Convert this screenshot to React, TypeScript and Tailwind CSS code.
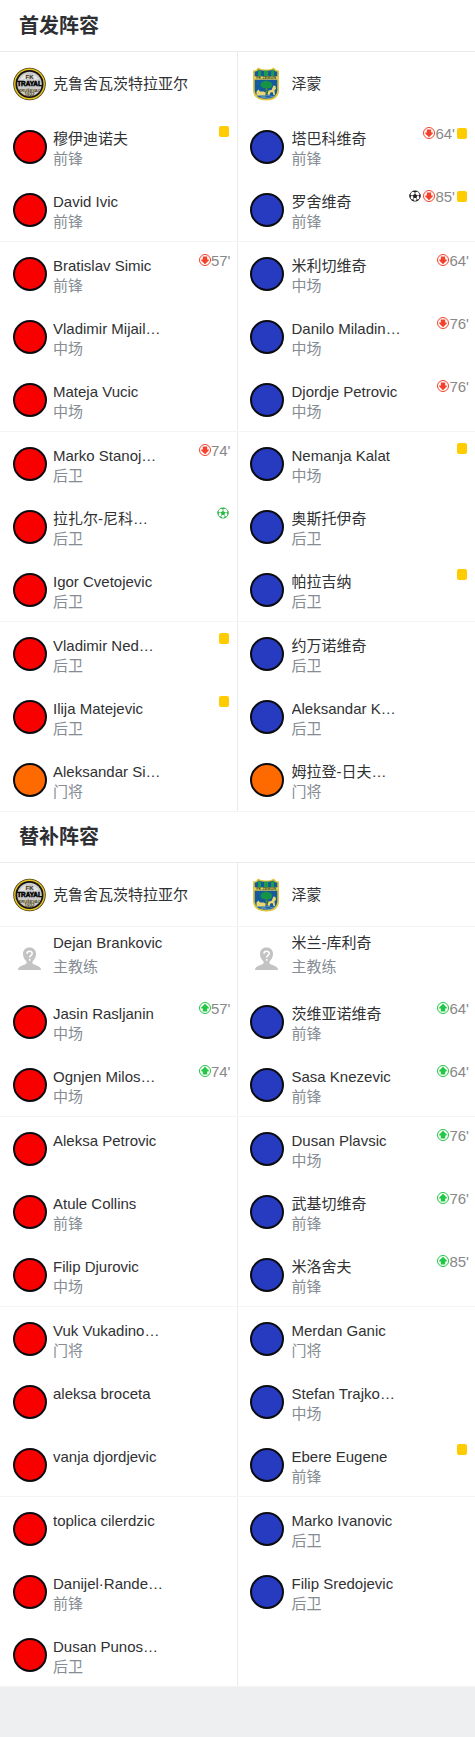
import React from "react";

type Kind = "red" | "blue" | "orange" | "coach";
type Event = "goal" | "ownGoal" | "out" | "in" | "card";
type Player = {
  name: string;
  role?: string;
  kind: Kind;
  events?: Event[];
  minute?: string;
};

const p = (kind: Kind, name: string, role?: string, events?: Event[], minute?: string): Player => ({
  kind,
  name,
  role,
  events,
  minute,
});

const startersHome: Player[] = [
  p("red", "穆伊迪诺夫", "前锋", ["card"]),
  p("red", "David Ivic", "前锋"),
  p("red", "Bratislav Simic", "前锋", ["out"], "57'"),
  p("red", "Vladimir Mijail…", "中场"),
  p("red", "Mateja Vucic", "中场"),
  p("red", "Marko Stanoj…", "后卫", ["out"], "74'"),
  p("red", "拉扎尔-尼科…", "后卫", ["ownGoal"]),
  p("red", "Igor Cvetojevic", "后卫"),
  p("red", "Vladimir Ned…", "后卫", ["card"]),
  p("red", "Ilija Matejevic", "后卫", ["card"]),
  p("orange", "Aleksandar Si…", "门将"),
];

const startersAway: Player[] = [
  p("blue", "塔巴科维奇", "前锋", ["out", "card"], "64'"),
  p("blue", "罗舍维奇", "前锋", ["goal", "out", "card"], "85'"),
  p("blue", "米利切维奇", "中场", ["out"], "64'"),
  p("blue", "Danilo Miladin…", "中场", ["out"], "76'"),
  p("blue", "Djordje Petrovic", "中场", ["out"], "76'"),
  p("blue", "Nemanja Kalat", "中场", ["card"]),
  p("blue", "奥斯托伊奇", "后卫"),
  p("blue", "帕拉吉纳", "后卫", ["card"]),
  p("blue", "约万诺维奇", "后卫"),
  p("blue", "Aleksandar K…", "后卫"),
  p("orange", "姆拉登-日夫…", "门将"),
];

const benchHome: Player[] = [
  p("coach", "Dejan Brankovic", "主教练"),
  p("red", "Jasin Rasljanin", "中场", ["in"], "57'"),
  p("red", "Ognjen Milos…", "中场", ["in"], "74'"),
  p("red", "Aleksa Petrovic"),
  p("red", "Atule Collins", "前锋"),
  p("red", "Filip Djurovic", "中场"),
  p("red", "Vuk Vukadino…", "门将"),
  p("red", "aleksa broceta"),
  p("red", "vanja djordjevic"),
  p("red", "toplica cilerdzic"),
  p("red", "Danijel·Rande…", "前锋"),
  p("red", "Dusan Punos…", "后卫"),
];

const benchAway: Player[] = [
  p("coach", "米兰-库利奇", "主教练"),
  p("blue", "茨维亚诺维奇", "前锋", ["in"], "64'"),
  p("blue", "Sasa Knezevic", "前锋", ["in"], "64'"),
  p("blue", "Dusan Plavsic", "中场", ["in"], "76'"),
  p("blue", "武基切维奇", "前锋", ["in"], "76'"),
  p("blue", "米洛舍夫", "前锋", ["in"], "85'"),
  p("blue", "Merdan Ganic", "门将"),
  p("blue", "Stefan Trajko…", "中场"),
  p("blue", "Ebere Eugene", "前锋", ["card"]),
  p("blue", "Marko Ivanovic", "后卫"),
  p("blue", "Filip Sredojevic", "后卫"),
];

function HomeLogo() {
  return (
    <svg viewBox="0 0 34 34" className="size-[34px] shrink-0" aria-hidden="true">
      <circle cx="16.5" cy="17" r="16.3" fill="#4a4218" />
      <circle cx="16.5" cy="17" r="15.4" fill="#e8c321" />
      <circle cx="16.5" cy="17" r="14" fill="#111" />
      <circle cx="16.5" cy="17" r="12.3" fill="#c9c9c9" />
      <path d="M7 13a10 10 0 0 1 6-6l2 5zM20 6l6 6-5 1z" fill="#e4e4e4" />
      <text x="16.5" y="11.5" textAnchor="middle" fontSize="6" fontWeight="bold" fill="#3a3210">FK</text>
      <text x="16.5" y="19.3" textAnchor="middle" fontSize="6.4" fontWeight="bold" fill="#000" stroke="#000" strokeWidth="0.5">TRAYAL</text>
      <text x="16.5" y="24.6" textAnchor="middle" fontSize="4" fontWeight="bold" fill="#54460f">KRUŠEVAC</text>
      <text x="16.5" y="29" textAnchor="middle" fontSize="4.5" fontWeight="bold" fill="#54460f">1932</text>
    </svg>
  );
}

function AwayLogo() {
  return (
    <svg viewBox="1.500 0 34 34" className="size-[34px] shrink-0" aria-hidden="true">
      <path d="M4.500 3.500Q8 3.500 9.500 .5Q13 2.800 17.500 2.400Q22 2.800 25.500 .5Q27 3.500 30.500 3.500V24Q29.500 33.500 17.500 33.500Q5.500 33.500 4.500 24Z" fill="#e0c63c" />
      <path d="M6.200 4.800Q9 4.500 10 2.600Q14 4 17.500 3.800Q21 4 25 2.600Q26 4.500 28.800 4.800V23.500Q28 31.800 17.500 31.800Q7 31.800 6.200 23.500Z" fill="#155a9d" />
      <path d="M9.500 3l3 .8V9h-3zM15.500 3.700h4.200V9h-4.200zM22.600 3.700l3-.9V9h-3z" fill="#1d9d4c" />
      <path d="M5.500 9.300h24.500v3.400H5.500z" fill="#e2cc56" />
      <text x="17.600" y="12.400" textAnchor="middle" fontSize="3.800" fontWeight="bold" fill="#33502c">FK ZEMUN</text>
      <path d="M17 20h2v7h-2z" fill="#587c2f" />
      <path d="M12 18q0-3 3-3.500 3-2 5 0 4 .5 3.500 3.500 .5 3-4 3.200-7 .8-7.500-3.200z" fill="#159447" />
      <path d="M8 27.500v-3l2-2 1.500 2H15l2 1v3H8zM19 27.500l1-4 3-.500 2-4.500 2 .5.500 3-1.500 1 .5 5h-1.500l-1-3-2 .5-1 2.500z" fill="#e9d871" />
      <path d="M8.500 29q2-1 4 0t4.500 0 4.500 0 5 0M12 30.800q3-1 6 0t5 0" stroke="#7fb0cc" strokeWidth=".7" fill="none" />
    </svg>
  );
}

function Avatar({ kind }: { kind: Kind }) {
  if (kind === "coach") {
    return (
      <svg viewBox="0 0 34 34" className="size-[34px] shrink-0" aria-hidden="true">
        <path
          d="M16.500 5.500c4 0 6.500 2.600 6.500 6.500 0 3.300-1.600 5.800-3.500 7.300v2.200c2 1.800 7.500 2 8.500 5.700v.8H5v-.8c1-3.700 6.500-3.900 8.500-5.700v-2.200C11.500 17.800 10 15.300 10 12c0-3.900 2.500-6.500 6.500-6.500z"
          fill="#c3c3c3"
        />
        <path d="M14 11.800c0-3.500 5.300-3.200 5.200-.3 0 2-2.500 1.800-2.500 4M16.700 17v1.700" fill="none" stroke="#fff" strokeWidth="1.500" />
      </svg>
    );
  }
  const fill = { red: "bg-[#f80000]", blue: "bg-[#263bc0]", orange: "bg-[#ff6a00]" }[kind];
  return <span className={`size-[34px] shrink-0 rounded-full border-2 border-[#0b0b12] ${fill}`} />;
}

function Ball({ color }: { color: string }) {
  return (
    <svg viewBox="0 0 12 12" className="mr-[2px] size-3 shrink-0" aria-hidden="true">
      <circle cx="6" cy="6" r="5.200" fill="#fff" stroke={color} strokeWidth=".8" />
      <path
        d="M6 3.700l2.300 1.700-.9 2.600H4.600l-.9-2.600zM3.400 1.100h5.200L6 2.700zM.6 3.700l1.800 1.900L1.100 8.600.5 6zM11.400 3.700L9.600 5.600l1.300 3 .6-2.600zM2 9.300l2.400.2.700 1.800-2-.6zM10 9.300l-2.400.2-.7 1.800 2-.6z"
        fill={color}
      />
      <path d="M6 4V2.500M8 5.500l1.900.2M7.200 7.700l.6 2M4.800 7.700l-.6 2M4 5.500l-1.900.2" stroke={color} strokeWidth=".6" />
    </svg>
  );
}

function Arrow({ up }: { up: boolean }) {
  const color = up ? "#22c745" : "#f4412c";
  return (
    <svg viewBox="0 0 12 12" className="size-3 shrink-0" aria-hidden="true">
      <circle cx="6" cy="6" r="5.500" fill="#fff" stroke={color} strokeWidth="1" />
      <path
        d={up ? "M6 1.800L9.800 5.600V6.500H8.200V9.500H3.800V6.500H2.200V5.600z" : "M6 10.200L9.800 6.400V5.500H8.200V2.500H3.800V5.500H2.200V6.400z"}
        fill={color}
      />
    </svg>
  );
}

function Events({ events, minute }: { events: Event[]; minute?: string }) {
  const onlyCard = events.length === 1 && events[0] === "card";
  return (
    <span className={`flex h-5 shrink-0 items-center self-start ${onlyCard ? "mt-[6px]" : "mt-2"}`}>
      {events.map((e) => {
        if (e === "goal") return <Ball key={e} color="#222222" />;
        if (e === "ownGoal") return <Ball key={e} color="#2fb84c" />;
        if (e === "card")
          return <span key={e} className="mr-[2px] ml-[2px] h-[11px] w-[10px] rounded-[2px] bg-[#ffcc00]" />;
        return (
          <React.Fragment key={e}>
            <Arrow up={e === "in"} />
            <span className="pt-[2px] text-[15px] leading-5 text-[#888888]">{minute}</span>
          </React.Fragment>
        );
      })}
    </span>
  );
}

const homeCell = "flex h-[63px] min-w-0 items-center gap-[6px] pr-[6px] pl-[13px]";
const awayCell = "flex h-[63px] min-w-0 items-center gap-2 pr-[6px] pl-3";

function PlayerCell({ player, cell }: { player?: Player; cell: string }) {
  if (!player) return <div className={cell} />;
  const coach = player.kind === "coach";
  return (
    <div className={cell}>
      <Avatar kind={player.kind} />
      <div className={`min-w-0 flex-1 text-[15px] ${coach ? "pb-2 leading-6" : "pt-1 leading-5"}`}>
        <p className="truncate text-[#303133]">{player.name}</p>
        <p className="min-h-5 text-[#858c93]">{player.role}</p>
      </div>
      {player.events && <Events events={player.events} minute={player.minute} />}
    </div>
  );
}

function Row({ left, right }: { left: React.ReactNode; right: React.ReactNode }) {
  return (
    <div className="grid grid-cols-2">
      <div className="border-r border-[#eaebed]">{left}</div>
      <div>{right}</div>
    </div>
  );
}

function TeamsRow() {
  return (
    <Row
      left={
        <div className={homeCell}>
          <HomeLogo />
          <span className="pt-px text-[15px] text-[#303133]">克鲁舍瓦茨特拉亚尔</span>
        </div>
      }
      right={
        <div className={awayCell}>
          <AwayLogo />
          <span className="pt-px text-[15px] text-[#303133]">泽蒙</span>
        </div>
      }
    />
  );
}

function Title({ children }: { children: string }) {
  return (
    <h2 className="flex h-[51px] items-center border-b border-[#eaebed] pl-[19px] text-[20px] font-bold text-[#2d2f33]">
      {children}
    </h2>
  );
}

function Lineup({ home, away, firstGroup }: { home: Player[]; away: Player[]; firstGroup: number }) {
  const groups: number[][] = [];
  let start = 0;
  while (start < home.length) {
    const end = Math.min(home.length, start + (start === 0 ? firstGroup : 3));
    groups.push(Array.from({ length: end - start }, (_, i) => start + i));
    start = end;
  }
  return (
    <>
      {groups.map((rows) => (
        <div key={rows[0]} className="border-b border-[#f3f4f5]">
          {rows.map((i) => (
            <Row
              key={i}
              left={<PlayerCell player={home[i]} cell={homeCell} />}
              right={<PlayerCell player={away[i]} cell={awayCell} />}
            />
          ))}
        </div>
      ))}
    </>
  );
}

export default function App() {
  return (
    <main className="min-h-screen bg-[#eeeff1] font-['Liberation_Sans','Noto_Sans_CJK_SC',sans-serif]" lang="zh-CN">
      <section className="bg-white pt-px">
        <Title>首发阵容</Title>
        <TeamsRow />
        <Lineup home={startersHome} away={startersAway} firstGroup={2} />
      </section>
      <section className="bg-white">
        <Title>替补阵容</Title>
        <div className="border-b border-[#f3f4f5]">
          <TeamsRow />
        </div>
        <Lineup home={benchHome} away={benchAway} firstGroup={3} />
      </section>
    </main>
  );
}
